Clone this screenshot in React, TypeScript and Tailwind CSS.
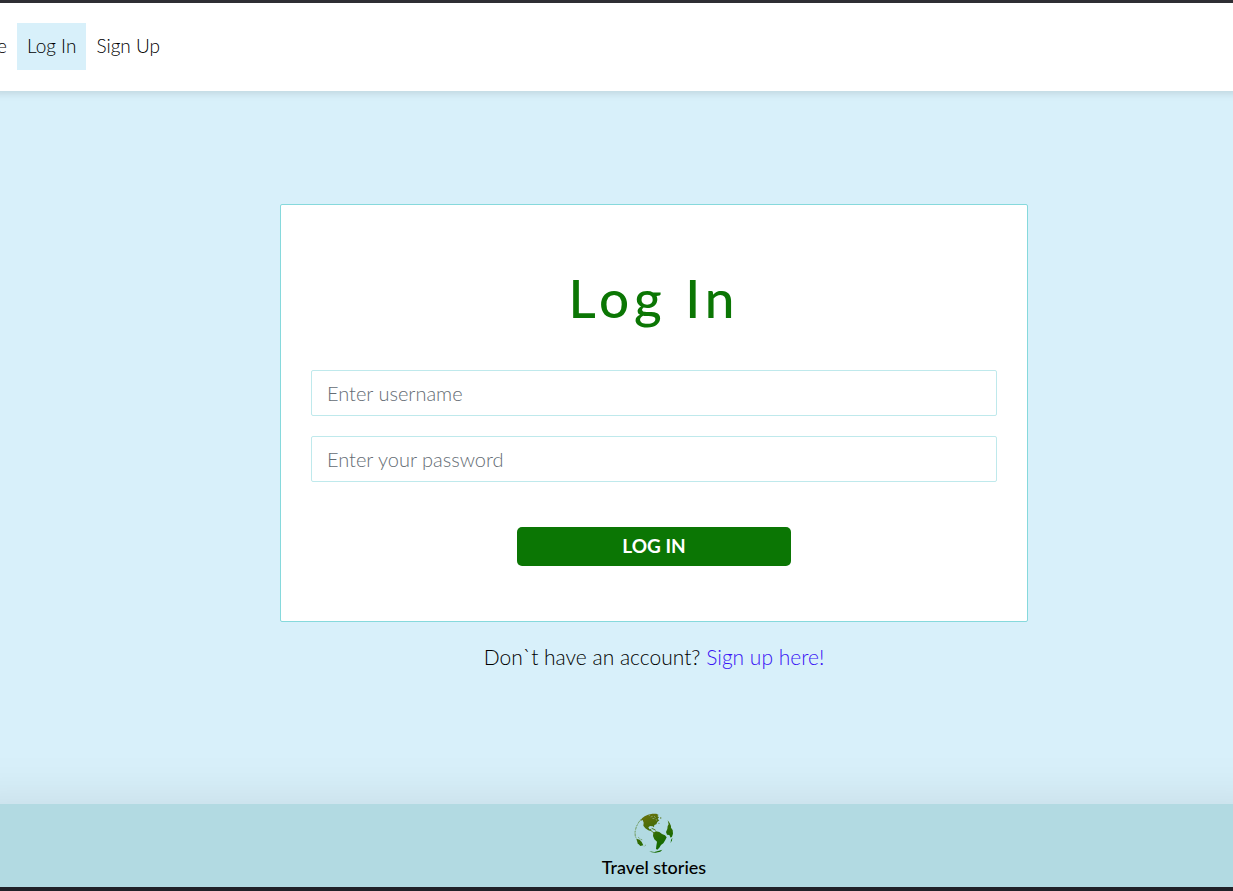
function Globe() {
  return (
    <svg viewBox="0 0 120 120" className="size-10" aria-hidden="true">
      <defs>
        <linearGradient id="land" x1="35" y1="15" x2="75" y2="95" gradientUnits="userSpaceOnUse">
          <stop offset="0" stopColor="#61700a" />
          <stop offset="0.45" stopColor="#3f6c06" />
          <stop offset="1" stopColor="#156a00" />
        </linearGradient>
      </defs>
      <g fill="url(#land)">
        <path d="M24 16 L32 10 L42 5 L55 2 L67 2 L74 6 L70 9 L75 13 L71 18 L76 22 L70 27 L67 34 L61 36 L60 43 L56 40 L48 39 L43 43 L46 49 L52 49 L50 54 L43 52 L34 46 L28 38 L29 29 L26 21 L19 24 Z" />
        <path d="M58 59 L66 55 L76 57 L84 63 L93 67 L98 73 L94 81 L88 91 L81 96 L76 104 L70 110 L66 108 L67 98 L69 86 L61 79 L57 69 Z" />
        <path d="M101 22 L107 30 L111 39 L111 44 L116 51 L117 62 L114 71 L110 74 L106 66 L99 65 L96 57 L100 48 L101 39 L104 34 Z" />
        <path d="M7 77 L17 80 L23 87 L28 97 L19 99 L11 91 Z" />
        <path d="M46 115 L61 117 L72 114 L85 110 L79 116 L65 119 L53 118 Z" />
        <path d="M115 74 L114 82 L110 90 L111 81 Z" />
        <path d="M79 12 L83 15 L79 18 Z M74 29 L78 31 L73 32 Z" />
      </g>
      <g fill="none" stroke="#4f7a1c" strokeWidth="2">
        <path d="M22 18 L14 28 L7 41 L3 57 L4 72" strokeDasharray="6 2 9 3" />
        <path d="M49 51 L55 56 L61 60 M53 46 L60 49 L65 52" strokeWidth="3" />
        <path d="M4 72 L9 76 M13 73 L20 79 L26 81 M31 100 L36 95" strokeDasharray="3 2" />
      </g>
      <path
        d="M50 12 L56 10 M60 9 L64 13 L60 17 L55 16 M66 18 L68 23 M44 8 L48 7"
        fill="none"
        stroke="#b2dae2"
        strokeWidth="2"
        opacity="0.6"
      />
    </svg>
  );
}

const field =
  "h-[46px] w-full rounded-xs border border-[#bfe9ec] bg-white px-[15px] text-[20px] font-light text-black outline-none placeholder:text-[#646c74]";

export default function App() {
  return (
    <div className="flex min-h-screen flex-col border-t-3 border-b-4 border-t-[#36353c] border-b-[#24252d] bg-[#d8f0fa] font-['Lato','Open_Sans',sans-serif] font-light text-black">
      <header className="bg-white py-5 shadow-[0_-6px_8px_8px_rgba(0,0,0,0.12)]">
        <nav className="flex h-12 items-start text-[19px]">
          <a href="#home" className="flex h-[47px] w-[7px] items-center justify-end overflow-hidden">
            Home
          </a>
          <a href="#login" aria-current="page" className="ml-[10px] flex h-[47px] items-center bg-[#d8f0fa] px-[10px]">
            Log In
          </a>
          <a href="#signup" className="flex h-[47px] items-center px-[10px]">
            Sign Up
          </a>
        </nav>
      </header>

      <main className="flex flex-1 flex-col items-center pt-[113px] pl-[75px]">
        <form
          onSubmit={(e) => e.preventDefault()}
          className="flex w-full max-w-[748px] flex-col items-center rounded-xs border border-[#86d9dc] bg-white px-[30px] pt-[58px] pb-[55px]"
        >
          <h1 className="pb-[37px] text-[53px] leading-[70px] font-medium tracking-[5px] text-[#0b7604]">Log In</h1>
          <input aria-label="Username" type="text" placeholder="Enter username" className={field} />
          <input aria-label="Password" type="password" placeholder="Enter your password" className={`${field} mt-5`} />
          <button
            type="submit"
            className="mt-[45px] h-[39px] w-2/5 rounded-[5px] bg-[#0b7604] text-[19px] font-bold text-white"
          >
            LOG IN
          </button>
        </form>
        <p className="pt-5 text-[21px] leading-[30px]">
          Don`t have an account?{" "}
          <a href="#signup" className="text-[#3a14f5]">
            Sign up here!
          </a>
        </p>
      </main>

      <footer className="flex flex-col items-center bg-[#b2dae2] pt-[9px] pb-2 pl-[75px] shadow-[0_50px_50px_50px_rgba(0,0,0,0.1)]">
        <Globe />
        <span className="pt-0.5 text-[18px] leading-6 font-medium">Travel stories</span>
      </footer>
    </div>
  );
}
